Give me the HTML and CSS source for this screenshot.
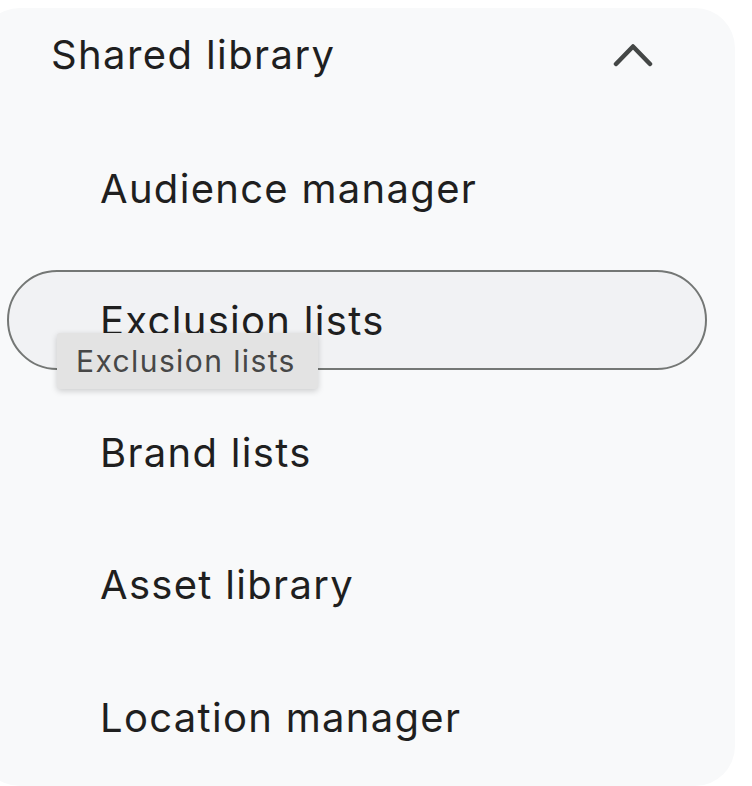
FILE: index.html
```html
<!DOCTYPE html>
<html>
<head>
<meta charset="utf-8">
<link rel="stylesheet" href="styles.css">
</head>
<body>
<div class="panel">
  <div class="header">
    <span class="header-title">Shared library</span>
    <svg class="chevron" width="40" height="26" viewBox="0 0 40 26"><path d="M3 22 L20 4.5 L37 22" fill="none" stroke="#444746" stroke-width="4.5" stroke-linecap="round" stroke-linejoin="round"/></svg>
  </div>
  <div class="items">
    <div class="item">Audience manager</div>
    <div class="item active">Exclusion lists</div>
    <div class="item">Brand lists</div>
    <div class="item">Asset library</div>
    <div class="item">Location manager</div>
  </div>
  <div class="tooltip">Exclusion lists</div>
</div>
</body>
</html>
```
FILE: styles.css
```css
html, body {
  margin: 0;
  padding: 0;
  background: #ffffff;
  overflow: hidden;
}
body {
  font-family: Inter, Roboto, "Liberation Sans", sans-serif;
  color: #1f1f1f;
}
.panel {
  position: relative;
  margin-top: 8px;
  margin-left: -20px;
  width: 755px;
  height: 778px;
  border-radius: 40px;
  background: #f8f9fa;
}
.header {
  height: 92px;
  display: flex;
  align-items: center;
  justify-content: space-between;
  padding-left: 71px;
  padding-right: 82px;
}
.header-title {
  font-size: 40px;
  letter-spacing: 1.4px;
}
.chevron {
  display: block;
  margin-top: 2px;
}
.items {
  margin-top: 38px;
  display: flex;
  flex-direction: column;
  gap: 32.3px;
}
.item {
  box-sizing: border-box;
  height: 100px;
  width: 700px;
  margin-left: 27px;
  padding-left: 91px;
  display: flex;
  align-items: center;
  font-size: 40px;
  letter-spacing: 1.3px;
  border-radius: 50px;
  border: 2px solid transparent;
}
.item.active {
  border-color: #747775;
  background: #f1f2f4;
}
.tooltip {
  position: absolute;
  left: 77px;
  top: 325px;
  width: 261px;
  height: 56px;
  box-sizing: border-box;
  display: flex;
  align-items: center;
  padding-left: 19px;
  background: #e3e3e3;
  color: #474747;
  font-size: 30px;
  letter-spacing: 1.4px;
  border-radius: 3px;
  box-shadow: 0 2px 6px rgba(0,0,0,0.18);
}
```
